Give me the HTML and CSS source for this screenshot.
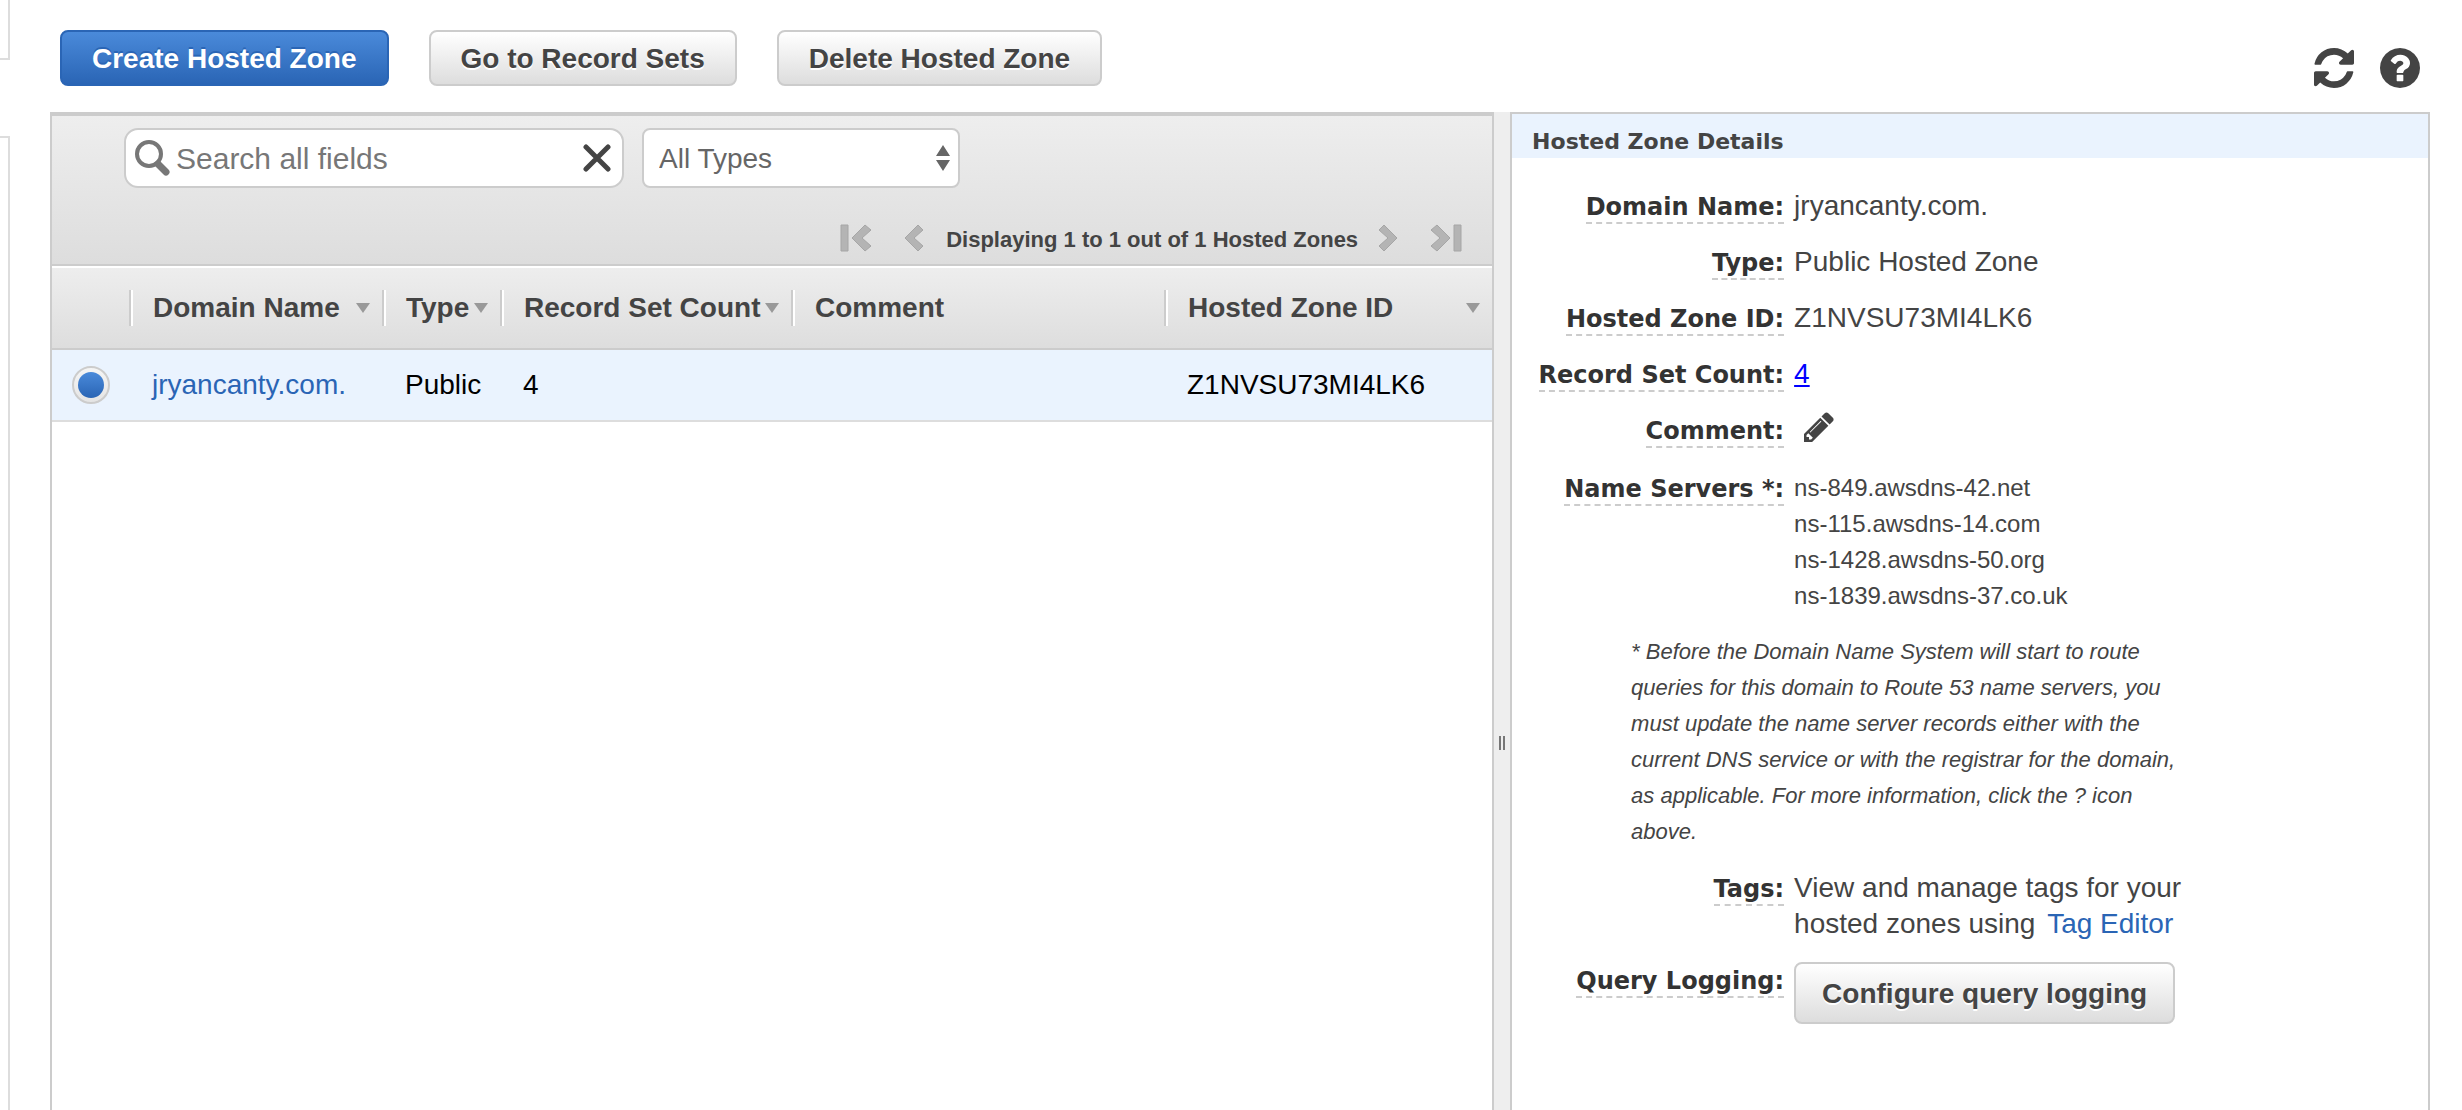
FILE: index.html
```html
<!DOCTYPE html>
<html lang="en">
  <head>
    <meta charset="UTF-8" />
    <meta name="viewport" content="width=device-width, initial-scale=1.0" />
    <title>Hosted Zones</title>
    <link rel="stylesheet" href="styles.css">
  </head>
  <body>
    <div class="sidebar">
      <div class="side-top"></div>
      <div class="side-bottom"></div>
    </div>

    <div class="main">
      <div class="toolbar">
        <button type="button" class="btn btn-primary">Create Hosted Zone</button>
        <button type="button" class="btn">Go to Record Sets</button>
        <button type="button" class="btn">Delete Hosted Zone</button>
        <div class="tools">
          <button type="button" class="icon-btn" aria-label="Refresh">
            <svg width="40" height="40" viewBox="0 0 1536 1536"><path d="M1511 928q0 5-1 7-64 268-268 434.500t-478 166.500q-146 0-282.500-55t-243.500-157l-129 129q-19 19-45 19t-45-19-19-45v-448q0-26 19-45t45-19h448q26 0 45 19t19 45-19 45l-137 137q71 66 161 102t187 36q134 0 250-65t186-179q11-17 53-117 8-23 30-23h192q13 0 22.500 9.500t9.500 22.500zm25-800v448q0 26-19 45t-45 19h-448q-26 0-45-19t-19-45 19-45l138-138q-148-137-349-137-134 0-250 65t-186 179q-11 17-53 117-8 23-30 23h-199q-13 0-22.500-9.500t-9.500-22.500v-7q65-268 270-434.500t480-166.500q146 0 284 55.500t245 156.500l130-129q19-19 45-19t45 19 19 45z"/></svg>
          </button>
          <button type="button" class="icon-btn" aria-label="Help">
            <svg width="40" height="40" viewBox="128 128 1536 1536"><path d="M1024 1376v-192q0-14-9-23t-23-9h-192q-14 0-23 9t-9 23v192q0 14 9 23t23 9h192q14 0 23-9t9-23zm256-672q0-88-55.500-163t-138.500-116-170-41q-243 0-371 213-15 24 8 42l132 100q7 6 19 6 16 0 25-12 53-68 86-92 34-24 86-24 48 0 85.500 26t37.500 59q0 38-20 61t-68 45q-63 28-115.500 86.500t-52.500 125.500v36q0 14 9 23t23 9h192q14 0 23-9t9-23q0-19 21.500-49.500t54.500-49.500q32-18 49-28.500t46-35 44.500-48 28-60.500 12.500-81zm384 192q0 209-103 385.500t-279.500 279.500-385.500 103-385.500-103-279.500-279.500-103-385.500 103-385.500 279.500-279.500 385.500-103 385.500 103 279.500 279.500 103 385.500z"/></svg>
          </button>
        </div>
      </div>

      <div class="panels">
        <section class="list">
          <div class="filters">
            <div class="filter-row">
              <div class="search">
                <svg width="36" height="36" viewBox="0 0 36 36"><ellipse cx="15" cy="14" rx="12" ry="12" fill="none" stroke="#777" stroke-width="4"/><path d="M24 24l8 8" stroke="#777" stroke-width="7" stroke-linecap="round"/></svg>
                <input type="text" aria-label="Search all fields" placeholder="Search all fields" />
                <button type="button" class="icon-btn" aria-label="Clear search">
                  <svg width="28" height="28" viewBox="0 0 28 28"><path d="M3 3l22 22M25 3L3 25" stroke="#444" stroke-width="5" stroke-linecap="round"/></svg>
                </button>
              </div>
              <div class="select-wrap">
                <select aria-label="Type">
                  <option>All Types</option>
                </select>
                <svg width="14" height="26" viewBox="0 0 14 26"><path d="M7 0l7 11H0zM7 26l7-11H0z" fill="#666"/></svg>
              </div>
            </div>
            <div class="pager">
              <button type="button" class="icon-btn" aria-label="First page">
                <svg width="32" height="28" viewBox="0 0 32 28"><path d="M1 1h7v26H1zM25 1l6 5-9 8 9 8-6 5-13-13z"/></svg>
              </button>
              <button type="button" class="icon-btn page-prev" aria-label="Previous page">
                <svg width="20" height="28" viewBox="0 0 20 28"><path d="M14 1l5 5-9 8 9 8-5 5L1 14z"/></svg>
              </button>
              <span>Displaying 1 to 1 out of 1 Hosted Zones</span>
              <button type="button" class="icon-btn page-next" aria-label="Next page">
                <svg width="20" height="28" viewBox="0 0 20 28"><path d="M6 1L1 6l9 8-9 8 5 5 13-13z"/></svg>
              </button>
              <button type="button" class="icon-btn" aria-label="Last page">
                <svg width="32" height="28" viewBox="0 0 32 28"><path d="M31 1h-7v26h7zM7 1L1 6l9 8-9 8 6 5 13-13z"/></svg>
              </button>
            </div>
          </div>

          <table class="zones">
            <colgroup>
              <col class="col-pick"><col class="col-name"><col class="col-type"><col class="col-count"><col class="col-comment"><col>
            </colgroup>
            <thead>
              <tr>
                <th></th>
                <th><div class="th">Domain Name<i class="sort"></i></div></th>
                <th><div class="th">Type<i class="sort"></i></div></th>
                <th><div class="th">Record Set Count<i class="sort"></i></div></th>
                <th><div class="th">Comment</div></th>
                <th><div class="th">Hosted Zone ID<i class="sort"></i></div></th>
              </tr>
            </thead>
            <tbody>
              <tr>
                <td class="pick"><input type="radio" name="zone" aria-label="jryancanty.com." checked /></td>
                <td><a href="#">jryancanty.com.</a></td>
                <td>Public</td>
                <td>4</td>
                <td></td>
                <td>Z1NVSU73MI4LK6</td>
              </tr>
            </tbody>
          </table>
        </section>

        <div class="splitter"><span></span></div>

        <section class="details">
          <h2>Hosted Zone Details</h2>
          <dl>
            <dt><span>Domain Name:</span></dt>
            <dd>jryancanty.com.</dd>
            <dt><span>Type:</span></dt>
            <dd>Public Hosted Zone</dd>
            <dt><span>Hosted Zone ID:</span></dt>
            <dd>Z1NVSU73MI4LK6</dd>
            <dt><span>Record Set Count:</span></dt>
            <dd><a href="#" class="count">4</a></dd>
            <dt><span>Comment:</span></dt>
            <dd>
              <button type="button" class="icon-btn edit" aria-label="Edit comment">
                <svg width="30" height="30" viewBox="128 128 1536 1536"><path d="M491 1536l91-91-235-235-91 91v107h128v128h107zm523-928q0-22-22-22-10 0-17 7l-542 542q-7 7-7 17 0 22 22 22 10 0 17-7l542-542q7-7 7-17zm-54-192l416 416-832 832h-416v-416zm683 96q0 53-37 90l-166 166-416-416 166-165q36-38 90-38 53 0 91 38l235 234q37 39 37 91z"/></svg>
              </button>
            </dd>
            <dt><span>Name Servers *:</span></dt>
            <dd class="servers">
              ns-849.awsdns-42.net<br>
              ns-115.awsdns-14.com<br>
              ns-1428.awsdns-50.org<br>
              ns-1839.awsdns-37.co.uk
            </dd>
          </dl>
          <p class="note">* Before the Domain Name System will start to route queries for this domain to Route 53 name servers, you must update the name server records either with the current DNS service or with the registrar for the domain, as applicable. For more information, click the ? icon above.</p>
          <dl>
            <dt><span>Tags:</span></dt>
            <dd class="tags">View and manage tags for your hosted zones using <a href="#">Tag Editor</a></dd>
            <dt><span>Query Logging:</span></dt>
            <dd><button type="button" class="btn btn-large">Configure query logging</button></dd>
          </dl>
        </section>
      </div>
    </div>
  </body>
</html>
```
FILE: styles.css
```css
* {
  box-sizing: border-box;
}
body {
  margin: 0;
  min-height: 100vh;
  display: flex;
  background: #fff;
  color: #444;
  font-family: "Helvetica Neue", "Liberation Sans", Arial, sans-serif;
  font-size: 28px;
}
button,
input,
select {
  font: inherit;
  color: inherit;
}
a {
  color: #2a65b5;
  text-decoration: none;
}

/* edge of the collapsed navigation */
.sidebar {
  flex: none;
  width: 10px;
  margin-right: 40px;
  display: flex;
  flex-direction: column;
  gap: 76px;
}
.side-top,
.side-bottom {
  border: 2px solid #ddd;
  border-left: none;
}
.side-top {
  height: 60px;
  border-top: none;
}
.side-bottom {
  flex: 1;
  border-bottom: none;
}

.main {
  flex: 1;
  min-width: 0;
  margin-right: 32px;
  display: flex;
  flex-direction: column;
}
.toolbar {
  height: 112px;
  padding: 30px 10px 0;
  display: flex;
  align-items: flex-start;
  gap: 40px;
}
.btn {
  height: 56px;
  padding: 2px 30px 0;
  border: 2px solid #ccc;
  border-radius: 8px;
  background: linear-gradient(#fff, #ddd);
  color: #444;
  font-weight: bold;
  text-shadow: 0 2px 0 #fff;
  white-space: nowrap;
  cursor: pointer;
}
.btn-primary {
  border-color: #2a65b5;
  background: linear-gradient(#4a8ada, #2a65b5);
  color: #fff;
  text-shadow: 0 -2px 0 #2a65b5;
}
.btn-large {
  height: 62px;
  padding: 2px 26px 0;
}
.icon-btn {
  display: flex;
  padding: 0;
  border: none;
  background: none;
  fill: #444;
  cursor: pointer;
}
.tools {
  margin-left: auto;
  padding-top: 18px;
  display: flex;
  gap: 26px;
}

.panels {
  flex: 1;
  display: flex;
}
.list {
  flex: 1445 1 0;
  min-width: 0;
  border: 2px solid #ccc;
  border-top-width: 4px;
  border-bottom: none;
}
.filters {
  height: 150px;
  padding-top: 12px;
  border-bottom: 2px solid #ccc;
  background: linear-gradient(#eee, #ddd);
}
.filter-row {
  display: flex;
  gap: 18px;
  padding-left: 72px;
}
.search {
  width: 500px;
  height: 60px;
  padding: 0 11px 0 8px;
  display: flex;
  align-items: center;
  border: 2px solid #ccc;
  border-radius: 14px;
  background: #fff;
}
.search input {
  flex: 1;
  min-width: 0;
  padding: 2px 6px 0;
  border: none;
  outline: none;
  background: none;
  font-size: 30px;
}
.search input::placeholder {
  color: #777;
}
.select-wrap {
  display: grid;
  align-items: center;
}
.select-wrap select,
.select-wrap svg {
  grid-area: 1 / 1;
}
.select-wrap select {
  appearance: none;
  width: 318px;
  height: 60px;
  padding: 0 32px 0 15px;
  border: 2px solid #ccc;
  border-radius: 8px;
  background: #fff;
  color: #666;
}
.select-wrap svg {
  justify-self: end;
  margin-right: 10px;
  pointer-events: none;
}
.pager {
  display: flex;
  align-items: center;
  justify-content: flex-end;
  padding: 32px 30px 0 0;
  font-size: 22px;
  line-height: 32px;
  font-weight: bold;
}
.pager span {
  padding-top: 4px;
}
.pager .icon-btn {
  fill: #b4b4b4;
  stroke: #a6a6a6;
}
.page-prev {
  margin: 0 22px 0 32px;
}
.page-next {
  margin: 0 32px 0 20px;
}

.zones {
  width: 100%;
  table-layout: fixed;
  border-collapse: separate;
  border-spacing: 0;
}
.col-pick {
  width: 77px;
}
.col-name {
  width: 253px;
}
.col-type {
  width: 118px;
}
.col-count {
  width: 291px;
}
.col-comment {
  width: 373px;
}
.zones thead {
  background: linear-gradient(#eee, #ddd);
}
.zones th {
  height: 84px;
  padding: 0;
  border-top: 2px solid #fff;
  border-bottom: 2px solid #ccc;
}
.th {
  display: flex;
  align-items: center;
  justify-content: space-between;
  height: 36px;
  padding: 0 12px 0 22px;
  border-left: 2px solid #ccc;
  box-shadow: inset 2px 0 0 #fff;
  white-space: nowrap;
}
.sort {
  border: 7px solid transparent;
  border-top: 10px solid #999;
  border-bottom: none;
}
.zones td {
  height: 72px;
  padding: 0 0 0 23px;
  border-bottom: 2px solid #ddd;
  background: #eaf3fe;
  color: #000;
}
.zones td.pick {
  padding-left: 20px;
}
.pick input {
  appearance: none;
  display: block;
  width: 38px;
  height: 38px;
  margin: 0;
  padding: 4px;
  border: 2px solid #ccc;
  border-radius: 50%;
  background: linear-gradient(#f5f5f5, #e5e5e5);
}
.pick input:checked::before {
  content: "";
  display: block;
  width: 26px;
  height: 26px;
  border-radius: 50%;
  background: linear-gradient(#4a8ada, #2a65b5);
}

.splitter {
  width: 16px;
  padding-top: 624px;
  background: #eee;
}
.splitter span {
  display: block;
  width: 6px;
  height: 14px;
  margin: 0 auto;
  border: 2px solid #777;
  border-top: none;
  border-bottom: none;
}

.details {
  flex: 919 1 0;
  min-width: 0;
  border: 2px solid #ccc;
  border-bottom: none;
}
.details h2 {
  margin: 0 0 30px;
  padding: 12px 20px 0;
  background: #eaf3fe;
  font: bold 22px/32px Verdana, "DejaVu Sans", sans-serif;
}
.details dl {
  margin: 0;
  display: grid;
  grid-template-columns: 272px 390px;
  column-gap: 10px;
  row-gap: 20px;
  line-height: 36px;
}
.details dt {
  display: flex;
  align-items: flex-start;
  justify-content: flex-end;
  font: bold 24px/30px Verdana, "DejaVu Sans", sans-serif;
  color: #333;
}
.details dt span {
  padding-top: 4px;
  border-bottom: 2px dashed #ccc;
}
.details dd {
  margin: 0;
}
.details .count {
  color: #00f;
  text-decoration: underline;
}
.edit {
  margin-left: 10px;
  padding-bottom: 8px;
}
.servers {
  font-size: 24px;
}
.note {
  width: 560px;
  margin: 20px 0 20px 119px;
  font-size: 22px;
  line-height: 36px;
  font-style: italic;
}
.tags a {
  margin-left: 4px;
}
```
